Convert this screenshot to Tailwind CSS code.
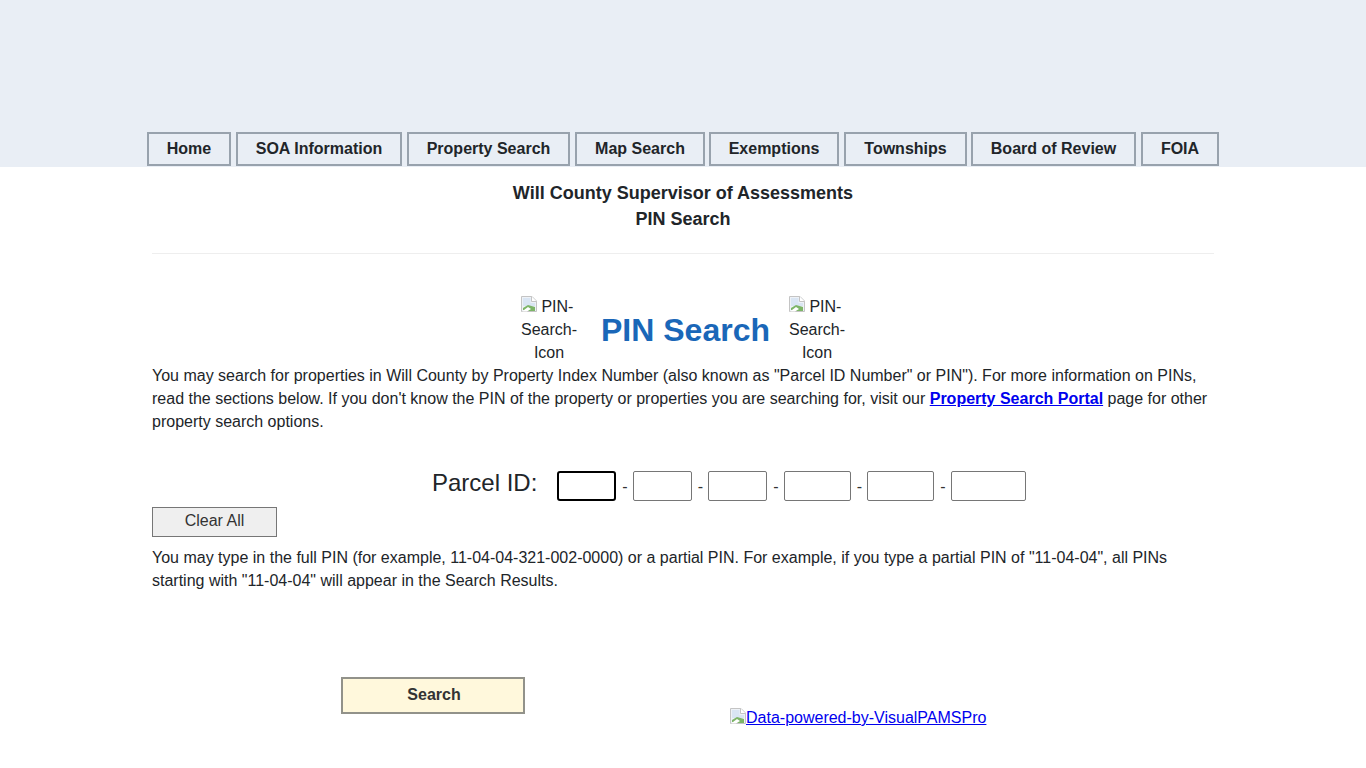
<!DOCTYPE html>
<html lang="en">

<head>
    <meta charset="UTF-8">
    <meta name="viewport" content="width=device-width, initial-scale=1.0">
    <title>PIN Search</title>
    <script src="https://cdn.jsdelivr.net/npm/@tailwindcss/browser@4"></script>
</head>

<body class="bg-white text-[#212529] text-base leading-[23px] font-['Liberation_Sans',Arial,sans-serif] overflow-hidden h-[768px]">
    <!-- header + nav -->
    <header class="h-[167px] bg-[#e9eef5] flex items-start justify-start pt-[132px] pl-[147px]">
        <nav class="flex font-bold text-[#212529]">
            <a href="#" class="w-[84px] h-[34px] border-2 border-[#98a2ad] flex items-center justify-center pb-[2px]">Home</a>
            <a href="#" class="ml-[5px] w-[166px] h-[34px] border-2 border-[#98a2ad] flex items-center justify-center pb-[2px]">SOA Information</a>
            <a href="#" class="ml-[5px] w-[163px] h-[34px] border-2 border-[#98a2ad] flex items-center justify-center pb-[2px]">Property Search</a>
            <a href="#" class="ml-[5px] w-[130px] h-[34px] border-2 border-[#98a2ad] flex items-center justify-center pb-[2px]">Map Search</a>
            <a href="#" class="ml-[4px] w-[130px] h-[34px] border-2 border-[#98a2ad] flex items-center justify-center pb-[2px]">Exemptions</a>
            <a href="#" class="ml-[5px] w-[123px] h-[34px] border-2 border-[#98a2ad] flex items-center justify-center pb-[2px]">Townships</a>
            <a href="#" class="ml-[4px] w-[165px] h-[34px] border-2 border-[#98a2ad] flex items-center justify-center pb-[2px]">Board of Review</a>
            <a href="#" class="ml-[5px] w-[78px] h-[34px] border-2 border-[#98a2ad] flex items-center justify-center pb-[2px]">FOIA</a>
        </nav>
    </header>

    <main class="w-[1062px] ml-[152px]">
        <div class="text-center font-bold text-lg leading-[26px] pt-[13px] pb-[21px] border-b border-[#eeeeee]">
            <p>Will County Supervisor of Assessments</p>
            <p>PIN Search</p>
        </div>

        <!-- title with the two broken images -->
        <div class="flex items-center pl-[369px] mt-[41px] h-[69px]">
            <div class="w-[56px] text-center">
                <span class="block text-left whitespace-nowrap"><svg class="inline-block align-[0px]" width="16" height="16" viewBox="0 0 16 16"><path d="M.5 .5H11L15.500 5V15.500H.5Z" fill="#eef2f7" stroke="#c4c4c4"/><path d="M10.500 .5V5.500H15.500" fill="#fff" stroke="#c4c4c4"/><path d="M2 2H9.500V7H14V10H2Z" fill="#d9e5f3"/><path d="M2 14V12L7 9L14 11V15H7Z" fill="#7db568"/><path d="M1 15.500L7 11L10 13L6 15.500Z" fill="#fff"/></svg> PIN-</span>
                Search-Icon
            </div>
            <h1 class="w-[212px] pl-[5px] text-center font-bold text-[32px] leading-[40px] text-[#1a67b8]">PIN Search</h1>
            <div class="w-[56px] text-center">
                <span class="block text-left whitespace-nowrap"><svg class="inline-block align-[0px]" width="16" height="16" viewBox="0 0 16 16"><path d="M.5 .5H11L15.500 5V15.500H.5Z" fill="#eef2f7" stroke="#c4c4c4"/><path d="M10.500 .5V5.500H15.500" fill="#fff" stroke="#c4c4c4"/><path d="M2 2H9.500V7H14V10H2Z" fill="#d9e5f3"/><path d="M2 14V12L7 9L14 11V15H7Z" fill="#7db568"/><path d="M1 15.500L7 11L10 13L6 15.500Z" fill="#fff"/></svg> PIN-</span>
                Search-Icon
            </div>
        </div>

        <p>You may search for properties in Will County by Property Index Number (also known as "Parcel ID Number" or PIN"). For more information on PINs, read the sections below. If you don't know the PIN of the property or properties you are searching for, visit our <a href="#" class="font-bold text-[#0000ee] underline">Property Search Portal</a> page for other property search options.</p>

        <!-- parcel id inputs -->
        <div class="flex items-center mt-[38px] pl-[280px] h-[30px] text-[#333333]">
            <label class="w-[125px] text-2xl leading-[30px] -mt-[7px] text-[#212529]">Parcel ID:</label>
            <input type="text" class="w-[59px] h-[30px] border-2 border-black rounded-[3px]">
            <span class="w-[17px] pl-[1px] text-center">-</span>
            <input type="text" class="w-[59px] h-[30px] border border-[#767676] rounded-[2px]">
            <span class="w-[16px] pl-[1px] text-center">-</span>
            <input type="text" class="w-[59px] h-[30px] border border-[#767676] rounded-[2px]">
            <span class="w-[17px] pl-[1px] text-center">-</span>
            <input type="text" class="w-[67px] h-[30px] border border-[#767676] rounded-[2px]">
            <span class="w-[16px] pl-[1px] text-center">-</span>
            <input type="text" class="w-[67px] h-[30px] border border-[#767676] rounded-[2px]">
            <span class="w-[17px] pl-[1px] text-center">-</span>
            <input type="text" class="w-[75px] h-[30px] border border-[#767676] rounded-[2px]">
        </div>

        <button class="block mt-[6px] w-[125px] h-[30px] bg-[#efefef] border border-[#767676] text-[#333333] pb-[3px]">Clear All</button>

        <p class="mt-[9px]">You may type in the full PIN (for example, 11-04-04-321-002-0000) or a partial PIN. For example, if you type a partial PIN of "11-04-04", all PINs starting with "11-04-04" will appear in the Search Results.</p>

        <!-- search + footer link -->
        <div class="flex items-start mt-[85px] pl-[189px]">
            <button class="w-[184px] h-[37px] bg-[#fff8dc] border-2 border-[#92928a] font-bold text-[#333333] pb-[3px] pl-[2px]">Search</button>
            <a href="#" class="ml-[205px] mt-[29px] text-[#0000ee] underline whitespace-nowrap flex items-center"><svg class="shrink-0 -translate-y-[2px]" width="16" height="16" viewBox="0 0 16 16"><path d="M.5 .5H11L15.500 5V15.500H.5Z" fill="#eef2f7" stroke="#c4c4c4"/><path d="M10.500 .5V5.500H15.500" fill="#fff" stroke="#c4c4c4"/><path d="M2 2H9.500V7H14V10H2Z" fill="#d9e5f3"/><path d="M2 14V12L7 9L14 11V15H7Z" fill="#7db568"/><path d="M1 15.500L7 11L10 13L6 15.500Z" fill="#fff"/></svg>Data-powered-by-VisualPAMSPro</a>
        </div>
    </main>
</body>

</html>
